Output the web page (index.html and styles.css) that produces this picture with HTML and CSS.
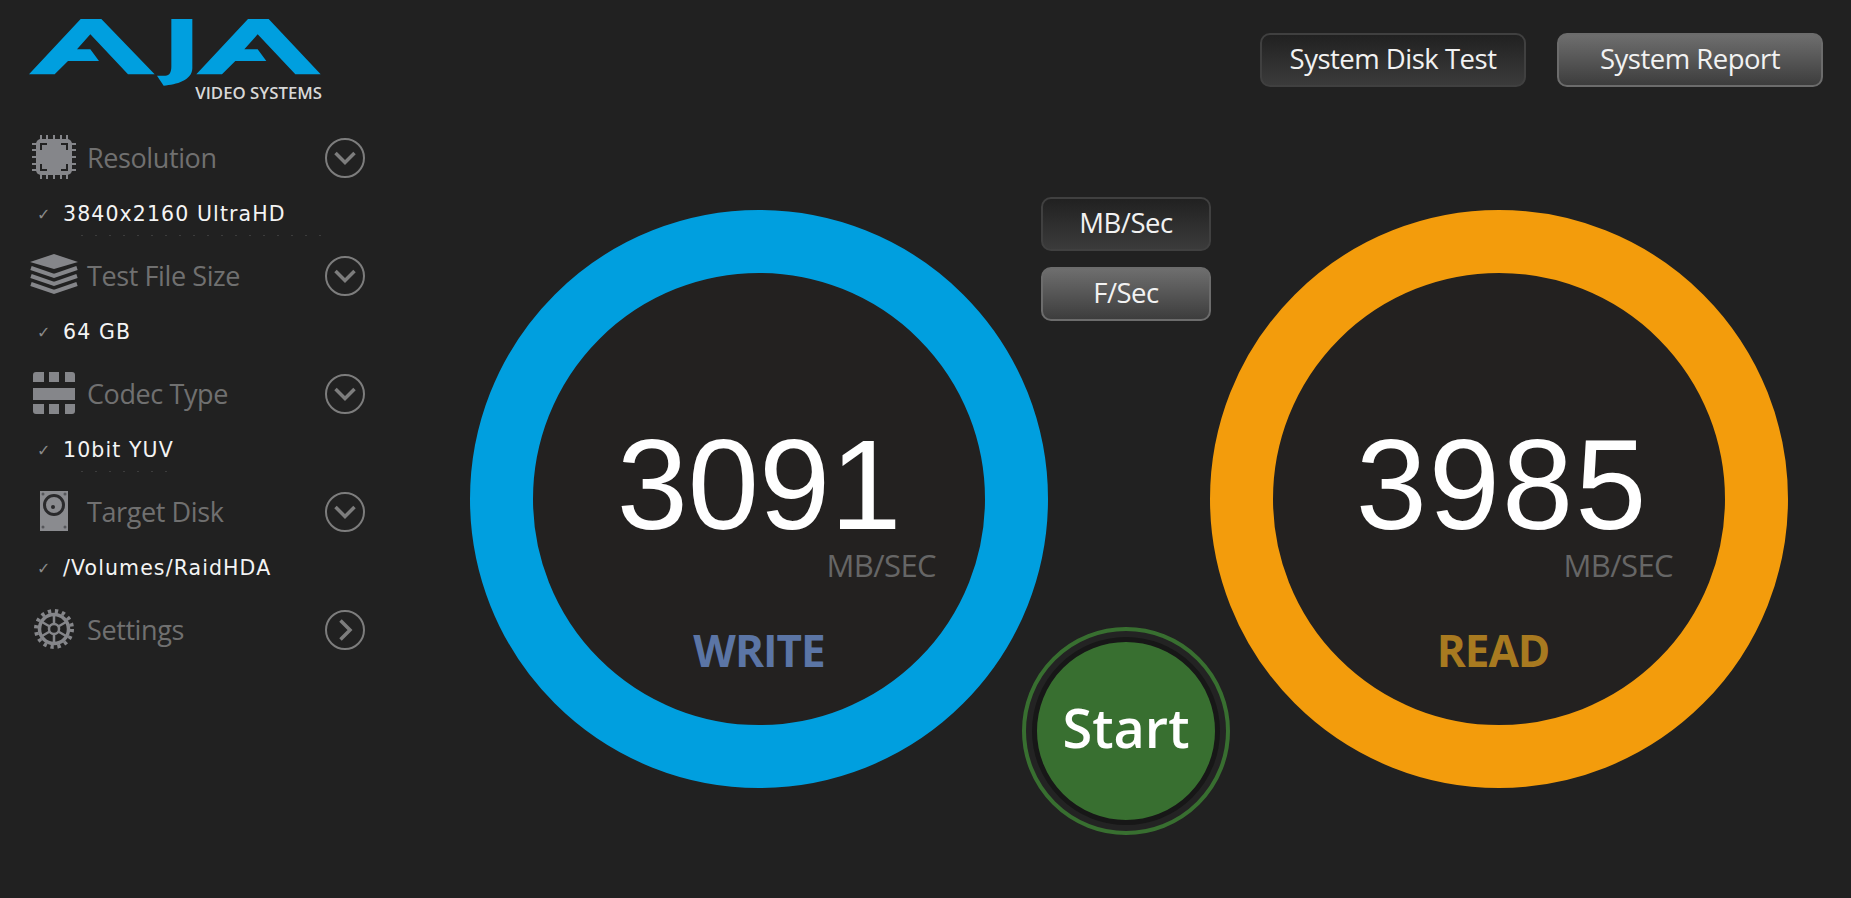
FILE: index.html
```html
<!DOCTYPE html>
<html lang="en">
<head>
    <meta charset="UTF-8">
    <title>AJA System Test</title>
    <link rel="stylesheet" href="styles.css">
</head>
<body>
    <svg class="defs" aria-hidden="true">
        <symbol id="chevron-down" viewBox="0 0 40 40">
            <circle cx="20" cy="20" r="19" fill="none" stroke="#7d7d7d" stroke-width="2"/>
            <polyline points="10.5,15 20,24.5 29.5,15" fill="none" stroke="#7d7d7d" stroke-width="3.5"/>
        </symbol>
        <symbol id="chevron-right" viewBox="0 0 40 40">
            <circle cx="20" cy="20" r="19" fill="none" stroke="#7d7d7d" stroke-width="2"/>
            <polyline points="15.5,10.5 25,20 15.5,29.5" fill="none" stroke="#7d7d7d" stroke-width="3.5"/>
        </symbol>
    </svg>

    <div class="app">
        <aside class="sidebar">
            <div class="logo">
                <svg class="logo-mark" viewBox="88 57 876 201">
                    <path fill="#009fdf" d="M88 223 L243 57 H305 L465 223 H385 L272 103 L232 148 H272 L298 183 H205 L165 223Z"/>
                    <path fill="#009fdf" d="M590 223 L745 57 H807 L963 223 H887 L774 103 L734 148 H774 L800 183 H707 L667 223Z"/>
                    <path fill="#009fdf" d="M515 57 H578 V205 C578 240 530 255 492 257 L472 227 H497 C510 227 515 215 515 200Z"/>
                </svg>
                <div class="logo-text">VIDEO SYSTEMS</div>
            </div>

            <div class="menu-item">
                <div class="menu-head">
                    <span class="menu-icon">
                        <svg width="44" height="44" viewBox="0 0 44 44">
                            <path stroke="#85868a" stroke-width="2" d="M9 0V44M15 0V44M22 0V44M29 0V44M35 0V44M0 9H44M0 15H44M0 22H44M0 29H44M0 35H44"/>
                            <rect x="4" y="4" width="36" height="36" rx="5" fill="#85868a"/>
                            <path fill="none" stroke="#222" stroke-width="2" d="M9 15V9H15M29 9H35V15M35 29V35H29M15 35H9V29"/>
                        </svg>
                    </span>
                    <span class="menu-label">Resolution</span>
                    <svg class="chevron"><use href="#chevron-down"/></svg>
                </div>
                <div class="menu-value"><span class="check">✓</span>3840x2160 UltraHD</div>
                <div class="menu-clip"></div>
            </div>

            <div class="menu-item">
                <div class="menu-head">
                    <span class="menu-icon">
                        <svg width="48" height="42" viewBox="0 0 48 42">
                            <polygon fill="#85868a" points="0,8 24,0 48,8 24,15"/>
                            <path fill="none" stroke="#85868a" stroke-width="4" d="M1 14L24 22L47 14M1 22L24 30L47 22M1 30L24 38L47 30"/>
                        </svg>
                    </span>
                    <span class="menu-label">Test File Size</span>
                    <svg class="chevron"><use href="#chevron-down"/></svg>
                </div>
                <div class="menu-value"><span class="check">✓</span>64 GB</div>
            </div>

            <div class="menu-item">
                <div class="menu-head">
                    <span class="menu-icon">
                        <svg width="42" height="42" viewBox="0 0 42 42" fill="#85868a">
                            <path d="M3 0H11V10H0V3Q0 0 3 0ZM16 0H26V10H16ZM32 0H39Q42 0 42 3V10H32Z"/>
                            <rect y="16" width="42" height="12"/>
                            <path d="M0 32H11V42H3Q0 42 0 39ZM16 32H26V42H16ZM32 32H42V39Q42 42 39 42H32Z"/>
                        </svg>
                    </span>
                    <span class="menu-label">Codec Type</span>
                    <svg class="chevron"><use href="#chevron-down"/></svg>
                </div>
                <div class="menu-value"><span class="check">✓</span>10bit YUV</div>
                <div class="menu-clip menu-clip-short"></div>
            </div>

            <div class="menu-item">
                <div class="menu-head">
                    <span class="menu-icon">
                        <svg width="28" height="40" viewBox="0 0 28 40">
                            <rect width="28" height="40" fill="#8a8b8f"/>
                            <circle cx="14" cy="14" r="9.5" fill="none" stroke="#2a2a2c" stroke-width="3"/>
                            <circle cx="13" cy="16" r="2" fill="#2a2a2c"/>
                            <g fill="#55565a">
                                <circle cx="3" cy="3" r="1.5"/>
                                <circle cx="25" cy="3" r="1.5"/>
                                <circle cx="3" cy="36" r="1.5"/>
                                <circle cx="25" cy="36" r="1.5"/>
                            </g>
                        </svg>
                    </span>
                    <span class="menu-label">Target Disk</span>
                    <svg class="chevron"><use href="#chevron-down"/></svg>
                </div>
                <div class="menu-value"><span class="check">✓</span>/Volumes/RaidHDA</div>
            </div>

            <div class="menu-item">
                <div class="menu-head">
                    <span class="menu-icon">
                        <svg width="40" height="40" viewBox="0 0 40 40" fill="none" stroke="#85868a">
                            <circle cx="20" cy="20" r="18" stroke-width="4" stroke-dasharray="3.3 3.8"/>
                            <circle cx="20" cy="20" r="14.5" stroke-width="3.5"/>
                            <path stroke-width="2.5" d="M20 6V34M8 13L32 27M8 27L32 13"/>
                            <circle cx="20" cy="20" r="5" fill="#222" stroke-width="2.5"/>
                        </svg>
                    </span>
                    <span class="menu-label">Settings</span>
                    <svg class="chevron"><use href="#chevron-right"/></svg>
                </div>
            </div>
        </aside>

        <main class="main">
            <div class="topbar">
                <button class="btn">System Disk Test</button>
                <button class="btn btn-active">System Report</button>
            </div>

            <div class="stage">
                <div class="ring ring-write">
                    <div class="ring-number">3091</div>
                    <div class="ring-unit">MB/SEC</div>
                    <div class="ring-label">WRITE</div>
                </div>

                <div class="center-col">
                    <button class="btn btn-mode">MB/Sec</button>
                    <button class="btn btn-mode btn-active">F/Sec</button>
                    <button class="start-btn"><span class="start-face">Start</span></button>
                </div>

                <div class="ring ring-read">
                    <div class="ring-number">3985</div>
                    <div class="ring-unit">MB/SEC</div>
                    <div class="ring-label">READ</div>
                </div>
            </div>
        </main>
    </div>
</body>
</html>
```

FILE: styles.css
```css
html, body {
    margin: 0;
    height: 100%;
    overflow: hidden;
    background: #212121;
}
.defs {
    display: none;
}
.app {
    display: flex;
    height: 100%;
    font-family: "Open Sans", sans-serif;
}

/* Sidebar */
.sidebar {
    width: 470px;
    flex: none;
    box-sizing: border-box;
    padding: 19px 0 0 29px;
}
.logo {
    width: 293px;
    height: 116px;
}
.logo-mark {
    display: block;
    width: 292px;
    height: 67px;
}
.logo-text {
    margin-top: -2px;
    text-align: right;
    font-size: 16.8px;
    font-weight: 600;
    line-height: 18px;
    color: #d8d8d8;
}
.menu-item {
    position: relative;
    width: 336px;
    height: 118px;
}
.menu-head {
    display: flex;
    align-items: center;
    height: 44px;
}
.menu-icon {
    display: flex;
    justify-content: center;
    align-items: center;
    width: 49px;
    height: 44px;
    margin-right: 9px;
}
.menu-label {
    flex: 1;
    font-size: 27px;
    letter-spacing: -0.4px;
    color: #707070;
}
.chevron {
    width: 40px;
    height: 40px;
    margin-top: 2px;
}
.menu-value {
    display: flex;
    align-items: center;
    height: 24px;
    margin-top: 23px;
    font-family: "DejaVu Sans", sans-serif;
    font-size: 20.5px;
    letter-spacing: 1.1px;
    color: #f4f4f4;
}
.check {
    width: 26px;
    padding-left: 8px;
    font-size: 16px;
    letter-spacing: 0;
    color: #8a8a8a;
}
.menu-clip {
    position: absolute;
    left: 52px;
    top: 100px;
    width: 240px;
    height: 1px;
    background: repeating-linear-gradient(90deg, #3c3c3c 0 2px, transparent 2px 14px);
}
.menu-clip-short {
    width: 90px;
}

/* Main */
.main {
    flex: 1;
    padding-top: 33px;
}
.topbar {
    display: flex;
    justify-content: flex-end;
    gap: 31px;
    padding-right: 28px;
    height: 54px;
}
.btn {
    width: 266px;
    height: 54px;
    box-sizing: border-box;
    padding: 0 0 3px;
    border: 2px solid #404040;
    border-radius: 10px;
    background: linear-gradient(#212121, #3b3b3b);
    font-family: "Open Sans", sans-serif;
    font-size: 27.5px;
    letter-spacing: -0.5px;
    color: #f2f2f2;
}
.btn-active {
    border-color: #6c6c6c;
    background: linear-gradient(#6e6e6e, #3d3d3d);
}
.btn-mode {
    width: 170px;
    flex: none;
}
.stage {
    display: flex;
    margin-top: 110px;
}
.ring {
    display: flex;
    flex-direction: column;
    align-items: center;
    width: 578px;
    height: 578px;
    box-sizing: border-box;
    flex: none;
    margin-top: 13px;
    border: 63px solid;
    border-radius: 50%;
    background: #232120;
}
.ring-write {
    border-color: #009fdf;
}
.ring-read {
    border-color: #f39c0c;
}
.ring-number {
    margin-top: 157px;
    font-family: "Liberation Sans", sans-serif;
    font-size: 128px;
    line-height: 110px;
    color: #fff;
}
.ring-read .ring-number {
    padding-left: 6px;
    letter-spacing: 2px;
}
.ring-unit {
    align-self: flex-end;
    margin-top: 7px;
    padding-right: 49px;
    font-size: 31px;
    line-height: 36px;
    letter-spacing: -0.6px;
    color: #666;
}
.ring-read .ring-unit {
    padding-right: 52px;
}
.ring-label {
    margin-top: 38px;
    font-size: 44px;
    font-weight: 700;
    line-height: 58px;
    letter-spacing: -1px;
    color: #5b75a5;
}
.ring-read .ring-label {
    padding-right: 12px;
    color: #a87a20;
}

/* Middle column */
.center-col {
    display: flex;
    flex-direction: column;
    align-items: center;
    gap: 16px;
    width: 156px;
    flex: none;
    margin-right: 6px;
}
.start-btn {
    flex: none;
    width: 208px;
    height: 208px;
    box-sizing: border-box;
    margin-top: 290px;
    padding: 0;
    border: 4px solid #386f30;
    border-radius: 50%;
    background: #232323;
    display: flex;
    align-items: center;
    justify-content: center;
}
.start-face {
    display: flex;
    align-items: center;
    justify-content: center;
    width: 178px;
    height: 170px;
    padding-bottom: 8px;
    border: 5px solid #171717;
    border-radius: 50%;
    background: #386f30;
    font-family: "Open Sans", sans-serif;
    font-size: 54px;
    font-weight: 600;
    line-height: 70px;
    color: #fff;
}
```
